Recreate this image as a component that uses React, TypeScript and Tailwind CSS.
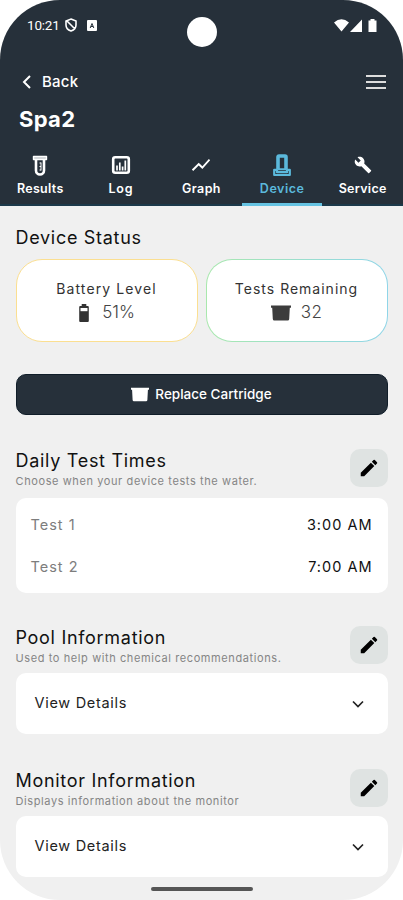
import { useState } from 'react';
import type { ReactNode } from 'react';
import { MdBuild, MdEdit, MdShowChart } from 'react-icons/md';

function ResultsIcon() {
  return (
    <svg width="16" height="21" viewBox="0 0 16 21" fill="none">
      <path d="M1.500 1.500h13v3h-13z" fill="#c9cdd0" stroke="#fff" strokeWidth="1.400" strokeLinejoin="round" />
      <path d="M4 5v10.500a4 4 0 0 0 8 0V5" stroke="#fff" strokeWidth="2.600" />
      <path d="M9 7.500v8M7.500 8H9M7.500 11.500H9M7.500 15H9" stroke="#fff" strokeWidth="1" />
    </svg>
  );
}

function LogIcon() {
  return (
    <svg width="20" height="20" viewBox="0 0 20 20" fill="none">
      <rect x="2.200" y="2.200" width="15.600" height="15.600" rx="2" stroke="#fff" strokeWidth="2.600" />
      <path d="M6 10.500v5M8.800 7.500v8M11.600 11.500v4M14.300 5.500v10" stroke="#fff" strokeWidth="1.700" />
    </svg>
  );
}

function DeviceIcon() {
  return (
    <svg width="20" height="24" viewBox="0 0 20 24" fill="none" stroke="#5bb9dc" strokeLinejoin="round">
      <path d="M6 16V4Q6 3 7 3h6q1 0 1 1v12" strokeWidth="3.600" />
      <path d="M2.200 16.800H5v2.400h10v-2.400h2.800v5.200H2.200z" strokeWidth="2.200" />
      <path d="M6 16.200h8" strokeWidth="2" />
    </svg>
  );
}

function CartridgeIcon({ className }: { className: string }) {
  return (
    <svg className={className} viewBox="0 0 20 16" fill="currentColor">
      <path d="M0 .5h20v2.200h-1.200L18.200 14q-.1 1.500-1.500 1.500H3.300Q1.900 15.500 1.800 14L1.200 2.700H0z" />
    </svg>
  );
}

function BatteryIcon() {
  return (
    <svg width="12" height="20" viewBox="0 0 12 20">
      <path d="M3.700 1h4.600v2h1.500q1 0 1 1v14q0 1-1 1H2.200q-1 0-1-1V4q0-1 1-1h1.500z" fill="#333" />
      <path d="M2.500 5h7v3.200h-7z" fill="#fff" />
    </svg>
  );
}

const tabs = [
  { label: 'Results', icon: <ResultsIcon />, tracking: 'tracking-[0.3px]' },
  { label: 'Log', icon: <LogIcon />, tracking: 'tracking-[0.7px]' },
  { label: 'Graph', icon: <MdShowChart size={22} />, tracking: 'tracking-[0.4px]' },
  { label: 'Device', icon: <DeviceIcon />, tracking: 'tracking-[0.5px]' },
  { label: 'Service', icon: <MdBuild size={18} />, tracking: 'tracking-[0.3px]' },
];

const testTimes = [
  { name: 'Test 1', time: '3:00 AM' },
  { name: 'Test 2', time: '7:00 AM' },
];

function StatusBar() {
  return (
    <div className="relative flex h-[50px] items-center justify-between pl-[27px] pr-[25px] text-white">
      <div className="flex items-center">
        <span className="w-[34px] whitespace-nowrap font-[Roboto] text-[13.500px] tracking-[-0.2px]">10:21</span>
        <svg className="ml-1" width="12" height="14" viewBox="0 0 12 14" fill="none" stroke="white" strokeWidth="1.600">
          <path d="M6 1 11 3v4c0 3-2 5-5 6-3-1-5-3-5-6V3zM2 3l8 8" />
        </svg>
        <svg className="ml-2.5" width="10" height="11" viewBox="0 0 10 11">
          <rect width="10" height="11" rx="1" fill="white" />
          <path d="M3.200 8 5 3.500 6.800 8M4 6.500h2" fill="none" stroke="#26303a" />
        </svg>
      </div>
      <div className="absolute left-[187px] top-[17px] h-[30px] w-[30px] rounded-full bg-white" />
      <svg width="44" height="15" viewBox="0 0 44 15" fill="white">
        <path d="M0 4.500q7.500-6.500 15 0L7.500 13.500zM16 14 28 1.500V14zM36.500 1h4v1.500h2V14h-8V2.500h2z" />
      </svg>
    </div>
  );
}

function SectionHeader({ title, subtitle }: { title: string; subtitle: string }) {
  return (
    <div className="flex h-[38px] items-center justify-between">
      <div className="pt-[3px]">
        <h2 className="text-[18px] leading-[22px] tracking-[0.700px]">{title}</h2>
        <p className="text-[11px] leading-[18px] tracking-[0.600px] text-[#858585]">{subtitle}</p>
      </div>
      <button aria-label={`Edit ${title}`} className="flex h-[38px] w-[38px] items-center justify-center rounded-[10px] bg-[#dfe3e2] text-black">
        <MdEdit size={22} />
      </button>
    </div>
  );
}

function Details({ children }: { children: ReactNode }) {
  const [open, setOpen] = useState(false);

  return (
    <div className="rounded-[10px] bg-white">
      <button onClick={() => setOpen(!open)} className="flex h-[61px] w-full items-center justify-between pl-[19px] pr-[24px] text-[14.500px] tracking-[0.700px] text-[#222]">
        <span className="-mt-px">View Details</span>
        <svg width="12" height="8" viewBox="0 0 12 8" fill="none" stroke="#222" strokeWidth="1.700">
          <path d="m1 1.500 5 5 5-5" />
        </svg>
      </button>
      {open && <div className="px-5 pb-4 text-sm text-[#858585]">{children}</div>}
    </div>
  );
}

export default function App() {
  const [active, setActive] = useState('Device');

  return (
    <div className="h-[900px] w-[403px] overflow-hidden bg-white font-[Inter,sans-serif]">
      <div className="relative flex h-full flex-col overflow-hidden rounded-[60px] bg-[#f0f0f0] text-[#111]">
        <header className="h-[206px] shrink-0 border-b-2 border-[#1c394a] bg-[#26303a] text-white">
          <StatusBar />
          <div className="mt-5 flex h-6 items-center justify-between pl-[22px] pr-[17px]">
            <button className="flex items-center gap-[11px] text-[15px] font-medium tracking-[0.200px]">
              <svg width="9" height="14" viewBox="0 0 9 14" fill="none" stroke="white" strokeWidth="2">
                <path d="M8 1 2 7l6 6" />
              </svg>
              Back
            </button>
            <button aria-label="Menu" className="flex w-5 flex-col gap-1">
              <span className="h-[2px] bg-[#ddd]" />
              <span className="h-[2px] bg-[#ddd]" />
              <span className="h-[2px] bg-[#ddd]" />
            </button>
          </div>
          <h1 className="mt-[11px] pl-[19px] text-[22px] font-bold leading-[28px] tracking-[0.300px]">Spa2</h1>
          <nav className="mt-[19px] grid h-[54px] grid-cols-5">
            {tabs.map((tab) => (
              <button
                key={tab.label}
                onClick={() => setActive(tab.label)}
                className={`flex h-[54px] flex-col items-center border-b-[3px] pt-px text-[12.500px] font-semibold ${
                  active === tab.label ? 'border-[#66c3e2] text-[#5bb9dc]' : 'border-transparent text-white'
                }`}
              >
                <span className="flex h-6 items-center">{tab.icon}</span>
                <span className={`leading-[24px] ${tab.tracking}`}>{tab.label}</span>
              </button>
            ))}
          </nav>
        </header>

        <main className="px-[15.500px] pt-5">
          <h2 className="text-[18px] leading-[24px] tracking-[0.700px]">Device Status</h2>
          <div className="mt-[9px] grid h-[83px] grid-cols-2 gap-2">
            <div className="flex flex-col items-center rounded-[26px] border border-[#fbdf91] bg-white pt-[17px]">
              <p className="text-[14px] leading-6 tracking-[1.100px] text-[#333]">Battery Level</p>
              <div className="flex h-6 items-center gap-3 text-[17px] font-light text-[#444]">
                <BatteryIcon />
                51%
              </div>
            </div>
            <div className="rounded-[26px] bg-linear-to-r from-[#a9e8ad] to-[#8fd5e8] p-px">
              <div className="flex h-full flex-col items-center rounded-[25px] bg-white pt-[17px]">
                <p className="text-[14px] leading-6 tracking-[1px] text-[#333]">Tests Remaining</p>
                <div className="flex h-6 items-center gap-2.5 text-[17px] font-light tracking-[0.500px] text-[#444]">
                  <CartridgeIcon className="h-4 w-5 text-[#3c3c3c]" />
                  32
                </div>
              </div>
            </div>
          </div>

          <button className="mt-8 flex h-[41px] w-full items-center justify-center gap-1.5 rounded-[10px] border border-[#101d29] bg-[#26303a] text-[13.500px] font-medium text-white">
            <CartridgeIcon className="h-[15px] w-[18px]" />
            Replace Cartridge
          </button>

          <section className="mt-[34px]">
            <SectionHeader title="Daily Test Times" subtitle="Choose when your device tests the water." />
            <div className="mt-[11px] flex h-[95px] flex-col justify-center rounded-[10px] bg-white px-[15px]">
              {testTimes.map((test) => (
                <div key={test.name} className="flex h-[42px] items-center justify-between text-[14.500px] tracking-[1px]">
                  <span className="text-[#7d7d7d]">{test.name}</span>
                  <span>{test.time}</span>
                </div>
              ))}
            </div>
          </section>

          <section className="mt-[33px]">
            <SectionHeader title="Pool Information" subtitle="Used to help with chemical recommendations." />
            <div className="mt-[9px]">
              <Details>No details</Details>
            </div>
          </section>

          <section className="mt-[35px]">
            <SectionHeader title="Monitor Information" subtitle="Displays information about the monitor" />
            <div className="mt-[9px]">
              <Details>No details</Details>
            </div>
          </section>
        </main>
        <div className="absolute bottom-[9px] left-[151px] h-[4px] w-[102px] rounded-full bg-[#555]" />
      </div>
    </div>
  );
}
